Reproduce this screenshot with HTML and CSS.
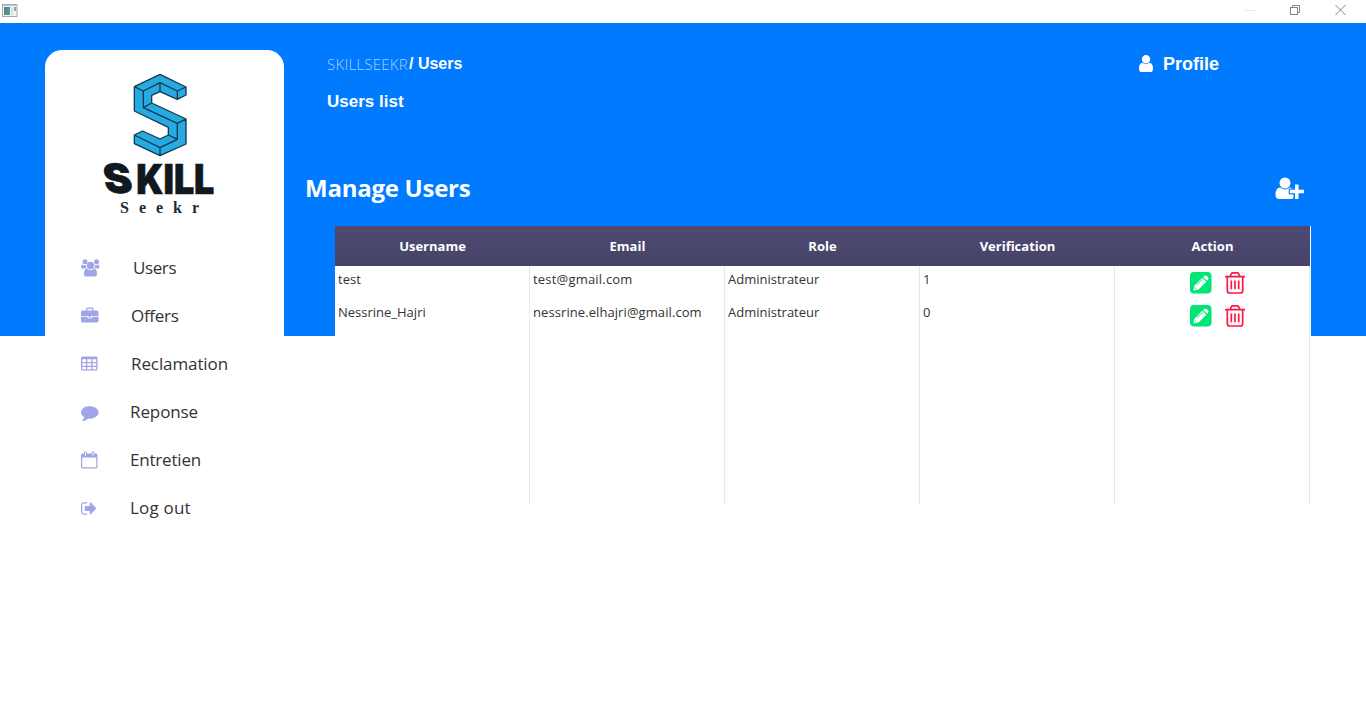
FILE: index.html
```html
<!DOCTYPE html>
<html lang="en">
<head>
<meta charset="utf-8">
<title>SkillSeekr</title>
<link rel="stylesheet" href="styles.css">
</head>
<body>
<header class="titlebar">
  <svg class="app-icon" width="16" height="14" viewBox="0 0 16 14">
    <defs><linearGradient id="pane" x2="1" y2="1"><stop offset="0" stop-color="#5277a8"/><stop offset="1" stop-color="#56a978"/></linearGradient></defs>
    <rect x=".5" y=".5" width="14.500" height="12" fill="#f3f3f5" stroke="#a9aab0"/>
    <path d="M1 1.500h13.500" stroke="#c4c5ca"/>
    <rect x="2" y="3" width="6" height="8" fill="url(#pane)"/><rect x="9" y="3" width="2" height="8" fill="#ddd"/><rect x="12" y="3" width="2" height="4" fill="#7dae9e"/>
  </svg>
  <div class="window-buttons">
    <svg width="10" height="10"><path d="M0 5.500h10" stroke="#e8e8e8"/></svg>
    <svg width="10" height="10" fill="none" stroke="#858585"><rect x=".5" y="2.500" width="7" height="7"/><path d="M2.500 2.500v-2h7v7h-2"/></svg>
    <svg width="11" height="11" stroke="#858585"><path d="M.5 0l10 10M10.500 0l-10 10"/></svg>
  </div>
</header>
<div class="app">
  <aside class="sidebar">
    <svg class="logo" viewBox="0 0 390 465">
      <path fill="#27aae1" d="M118 65L195 28L273 66V90L247 103L195 80L170 91V114L273 162V237L195 272L118 236V210L143 198L195 222L220 210V187L118 138Z"/>
      <path fill="none" stroke="#123a50" stroke-width="4" stroke-linejoin="round" d="M118 65L195 28L273 66V90L247 103L195 80L170 91V114L273 162V237L195 272L118 236V210L143 198L195 222L220 210V187L118 138ZM118 65L145 78V128L247 175V223L195 248L118 210M145 78L195 53L247 78L273 66M247 78V103M195 53V80M145 128L170 114M247 175L273 162M220 210L247 223M195 248V272"/>
      <g fill="#101820" stroke="#101820">
        <text class="brand" transform="translate(33 385) skewX(10)" textLength="84" lengthAdjust="spacingAndGlyphs">S</text>
        <text class="brand" x="124" y="386" textLength="234" lengthAdjust="spacingAndGlyphs">KILL</text>
      </g>
      <text class="brand-sub" x="75" y="443">Seekr</text>
    </svg>
    <nav class="menu">
      <a class="item item-users"><svg width="20" height="18" viewBox="0 0 20 18"><circle cx="4" cy="2.800" r="2.500"/><circle cx="15.500" cy="2.800" r="2.500"/><path d="M1.500 5.500Q4 7.500 5.300 5.600Q4.500 8 6 9.500H2Q0 9.500 0 8Q0 5.500 1.500 5.500M17 5.500Q15 7.500 13.600 5.600Q14.500 8 13 9.500H16.500Q18.500 9.500 18.500 8Q18.500 5.500 17 5.500"/><circle cx="9.500" cy="6.500" r="3.700"/><path d="M6 9.800Q9.500 12.500 13 9.800Q16 10 16 14.700Q16 17.500 13.500 17.500H5.500Q3 17.500 3 14.700Q3 10 6 9.800"/></svg><span>Users</span></a>
      <a class="item item-offers"><svg width="20" height="18" viewBox="0 0 20 18"><path fill-rule="evenodd" d="M5 3.500V1.800Q5 .5 6.500 .5H11Q12.500 .5 12.500 1.800V3.500H16Q17.500 3.500 17.500 5V9H0V5Q0 3.500 1.500 3.500ZM6.300 3.500H11.200V1.700H6.300ZM0 9.800H6.500V11.300H11V9.800H17.500V14Q17.500 15.500 16 15.500H1.500Q0 15.500 0 14Z"/><path d="M7.700 8.800h2v1.700h-2z"/></svg><span>Offers</span></a>
      <a class="item item-table"><svg width="20" height="18" viewBox="0 0 20 18"><path fill-rule="evenodd" d="M1.500 1.500H15Q16.500 1.500 16.500 3V14Q16.500 15.500 15 15.500H1.500Q0 15.500 0 14V3Q0 1.500 1.500 1.500M1.300 4.300V7H5V4.300ZM6.300 4.300V7H10.200V4.300ZM11.500 4.300V7H15.200V4.300ZM1.300 8.200V10.700H5V8.200ZM6.300 8.200V10.700H10.200V8.200ZM11.500 8.200V10.700H15.200V8.200ZM1.300 11.900V14.200H5V11.900ZM6.300 11.900V14.200H10.200V11.900ZM11.500 11.900V14.200H15.200V11.900Z"/></svg><span>Reclamation</span></a>
      <a class="item"><svg width="20" height="18" viewBox="0 -64 2048 1843"><path d="M1792 896q0 174-120 321.500t-326 233-450 85.500q-70 0-145-8-198 175-460 242-49 14-114 22-17 2-30.500-9t-17.500-29v-1q-3-4-.5-12t2-10 4.500-9.500l6-9 7-8.500 8-9q7-8 31-34.500t34.500-38 31-39.500 32.500-51 27-59 26-76q-157-89-247.500-220t-90.500-281q0-130 71-248.500t191-204.500 286-136.500 348-50.500q244 0 450 85.500t326 233 120 321.500z"/></svg><span>Reponse</span></a>
      <a class="item"><svg width="20" height="18" viewBox="0 0 20 18"><path fill-rule="evenodd" d="M1.500 2.500H3V2Q3 .3 4.500.3T6 2V2.500H10.500V2Q10.500.3 12 .3T13.500 2V2.500H15Q16.500 2.500 16.500 4V16Q16.500 17.500 15 17.500H1.500Q0 17.500 0 16V4Q0 2.500 1.500 2.500M1.200 6.500V16.300H15.300V6.500ZM4 1.600V4.800H5V1.600ZM11.500 1.600V4.800H12.500V1.600Z"/></svg><span class="tight">Entretien</span></a>
      <a class="item"><svg width="20" height="18" viewBox="64 -64 2048 1843"><path d="M704 1440q0 4 1 20t.5 26.500-3 23.500-10 19.500-20.500 6.500h-320q-119 0-203.500-84.500t-84.500-203.500v-704q0-119 84.500-203.500t203.500-84.500h320q13 0 22.500 9.500t9.500 22.500q0 4 1 20t.5 26.500-3 23.500-10 19.500-20.500 6.500h-320q-66 0-113 47t-47 113v704q0 66 47 113t113 47h312l11.500 1 11.500 3 8 5.500 7 9 2 13.500zm928-544q0 26-19 45l-544 544q-19 19-45 19t-45-19-19-45v-288h-448q-26 0-45-19t-19-45v-384q0-26 19-45t45-19h448v-288q0-26 19-45t45-19 45 19l544 544q19 19 19 45z"/></svg><span class="logout">Log out</span></a>
    </nav>
  </aside>
  <main class="content">
    <div class="topbar">
      <div class="crumbs"><span class="crumb-root">SKILLSEEKR</span><span class="crumb-page">/ Users</span></div>
      <div class="profile"><svg width="14" height="17" viewBox="0 128 1280 1536" preserveAspectRatio="none"><path d="M1280 1399q0 109-62.500 187t-150.500 78h-854q-88 0-150.500-78t-62.500-187q0-85 8.500-160.500t31.500-152 58.500-131 94-89 134.500-34.500q131 128 313 128t313-128q76 0 134.500 34.500t94 89 58.500 131 31.500 152 8.500 160.500zm-256-887q0 159-112.500 271.500t-271.500 112.500-271.500-112.500-112.500-271.500 112.500-271.500 271.500-112.500 271.500 112.500 112.500 271.500z"/></svg><span>Profile</span></div>
    </div>
    <p class="page-name">Users list</p>
    <div class="heading">
      <h1>Manage Users</h1>
      <svg width="30" height="23" viewBox="0 0 30 23"><circle cx="10" cy="6" r="5.500"/><path d="M5.200 10.500Q10 14.500 14.800 10.500Q16.500 10.500 17.500 12H19V11.800H14V17.200H18.500V21Q17.500 22 16 22H4.500Q.5 22 .5 18Q.5 10.500 5.200 10.500"/><path fill="#007bff" d="M19 6.500h5.500v5.300H30v5.500H24.500V23H19V17.300H13.700V11.800H19z"/><path d="M20 7.500h3.500v5.300H29v3.500H23.500V22H20V16.300H14.700V12.800H20z"/></svg>
    </div>
    <table class="users">
      <thead><tr><th>Username</th><th>Email</th><th>Role</th><th>Verification</th><th>Action</th></tr></thead>
      <tbody>
        <tr><td>test</td><td class="email-short">test@gmail.com</td><td>Administrateur</td><td>1</td><td><div class="actions">
          <svg width="22" height="22" viewBox="0 0 22 22"><g id="edit"><rect width="21.500" height="21.500" rx="4" fill="#00e676"/><path fill="#fff" d="M12.300 5.700L16.300 9.700L8.500 17.500L3.500 18.500L4.300 13.700ZM13.200 4.900L14.500 3.700Q15.600 3 16.600 3.900L18.200 5.500Q18.800 6.400 18.100 7.500L17.100 8.800Z"/><path d="M7 12.800l5.500-5.500M4.800 15.500l1.700 1.700" stroke="#00e676" stroke-width="1"/></g></svg>
          <svg width="20" height="22" viewBox="0 0 20 22"><g id="trash" fill="none" stroke="#ff1744" stroke-width="1.700"><path d="M0 4.700H20M2.300 4.700V18.500Q2.300 21 4.500 21H15.500Q17.700 21 17.700 18.500V4.700M5 4.500L6.300 1.800Q6.700 .9 7.700 .9H12.300Q13.300 .9 13.700 1.800L15 4.500M6.300 8.500V17.200M10 8.500V17.200M13.700 8.500V17.200"/></g></svg></div></td></tr>
        <tr><td>Nessrine_Hajri</td><td class="email">nessrine.elhajri@gmail.com</td><td>Administrateur</td><td>0</td><td><div class="actions">
          <svg width="22" height="22" viewBox="0 0 22 22"><use href="#edit"/></svg>
          <svg width="20" height="22" viewBox="0 0 20 22"><use href="#trash"/></svg></div></td></tr>
        <tr class="filler"><td></td><td></td><td></td><td></td><td></td></tr>
      </tbody>
    </table>
  </main>
</div>
</body>
</html>
```
FILE: styles.css
```css
* { box-sizing: border-box; }
body { margin: 0; height: 727px; overflow: hidden; background: #fff; font-family: "Open Sans", sans-serif; color: #333; }
svg { display: block; flex: none; }
.titlebar { height: 23px; display: flex; justify-content: space-between; padding: 4px 20px 0 2px; }
.window-buttons { display: flex; gap: 35px; padding-top: 1px; }
.app { height: 704px; display: flex; align-items: flex-start; padding: 27px 0 0 45px; background: linear-gradient(#007bff, #007bff) 0 0 / 100% 313px no-repeat; }
.sidebar { width: 239px; height: 500px; flex: none; background: #fff; border-radius: 17px; padding-top: 15px; }
.logo { width: 130px; height: 155px; margin-left: 50px; overflow: visible; }
.brand { font: 900 122px Inter, sans-serif; stroke-width: 2px; }
.brand-sub { font: bold 48px "Liberation Serif", serif; fill: #1c2b36; letter-spacing: 30px; }
.menu { padding: 24px 0 0 36px; }
.item { height: 48px; display: flex; align-items: center; gap: 29px; font-size: 17px; white-space: nowrap; }
.item span { padding-bottom: 2px; letter-spacing: -.1px; }
.item .logout { letter-spacing: .2px; }
.item .tight { letter-spacing: -.2px; }
.item svg { fill: #9fa5e6; }
.item-users { gap: 32px; }
.item-users span { letter-spacing: -.4px; }
.item-offers, .item-table { gap: 30px; }
.item-offers span { letter-spacing: -.3px; }
.content { flex: none; width: 1027px; }
.topbar { height: 27px; display: flex; justify-content: space-between; align-items: center; padding: 0 92px 0 43px; color: #fff; }
.crumbs, .profile { display: flex; align-items: center; font: bold 16px "Liberation Sans", sans-serif; }
.crumb-root { width: 82px; font: 300 15px "Open Sans", sans-serif; color: #a8d0ff; letter-spacing: .25px; }
.profile { gap: 10px; font-size: 18px; }
.profile span { padding-top: 1px; }
.profile svg, .heading svg { fill: #fff; }
.page-name { margin: 15px 0 0 43px; font: bold 17px/19px "Liberation Sans", sans-serif; color: #fff; }
.heading { height: 50px; margin-top: 52px; padding: 0 6px 0 21px; display: flex; align-items: center; justify-content: space-between; color: #fff; }
h1 { margin: 0; font-size: 24px; line-height: 34px; letter-spacing: -.25px; }
.users { width: 976px; margin: 13px 0 0 51px; border-collapse: separate; border-spacing: 0; border-right: 1px solid #fff; table-layout: fixed; background: #fff; font-size: 13px; }
.users thead tr { height: 40px; background: linear-gradient(#4e4a73, #464368); }
th { padding: 0; color: #fff; font-size: 13px; }
td { height: 33px; padding: 4px 3px 0; vertical-align: top; line-height: 18px; border-right: 1px solid #e8e8e8; }
.email { letter-spacing: .08px; }
.email-short { letter-spacing: .2px; }
.filler td { height: 173px; }
.actions { display: flex; justify-content: center; gap: 13px; padding: 2px 0 0 11px; }
```
